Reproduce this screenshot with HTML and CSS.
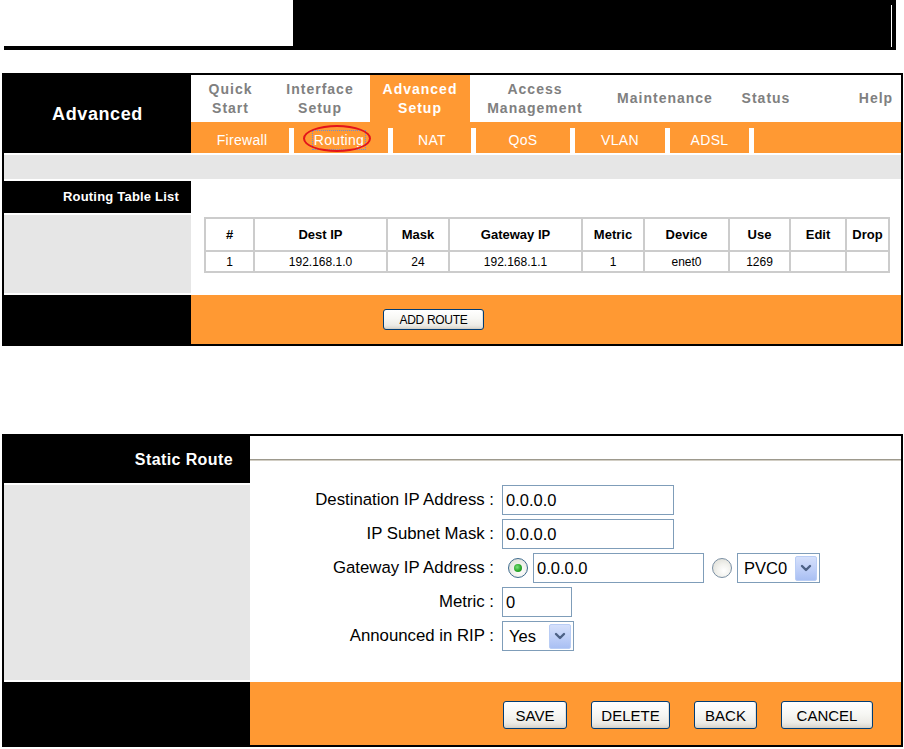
FILE: index.html
```html
<!DOCTYPE html>
<html>
<head>
<meta charset="utf-8">
<title>Advanced Setup - Routing</title>
<link rel="stylesheet" href="styles.css">
</head>
<body>
<div class="topbar">
  <div class="topbar-left"></div>
  <div class="topbar-right"><div class="topbar-tick"></div></div>
</div>

<div class="panel panel-routing">
  <div class="row nav-row">
    <div class="side side-black side-title">Advanced</div>
    <div class="nav">
      <div class="menu">
        <div class="menu-item w-qs">Quick<br>Start</div>
        <div class="menu-item w-is">Interface<br>Setup</div>
        <div class="menu-item w-as active">Advanced<br>Setup</div>
        <div class="menu-item w-am">Access<br>Management</div>
        <div class="menu-item w-mt">Maintenance</div>
        <div class="menu-item w-st">Status</div>
        <div class="menu-spacer"></div>
        <div class="menu-item w-hp">Help</div>
      </div>
      <div class="submenu">
        <div class="sub-item w-fw">Firewall</div>
        <div class="sub-item w-rt sub-current"><span class="focus-text">Routing</span><span class="ring"></span></div>
        <div class="sub-item w-nat">NAT</div>
        <div class="sub-item w-qos">QoS</div>
        <div class="sub-item w-vlan">VLAN</div>
        <div class="sub-item w-adsl">ADSL</div>
      </div>
    </div>
  </div>
  <div class="gap"></div>
  <div class="graybar"></div>
  <div class="gap"></div>
  <div class="row label-row">
    <div class="side side-black side-label">Routing Table List</div>
    <div class="main"></div>
  </div>
  <div class="gap"></div>
  <div class="row table-row">
    <div class="side side-gray"></div>
    <div class="main table-wrap">
      <table class="rtable">
        <colgroup>
          <col class="c1"><col class="c2"><col class="c3"><col class="c4"><col class="c5"><col class="c6"><col class="c7"><col class="c8"><col class="c9">
        </colgroup>
        <thead>
          <tr><th>#</th><th>Dest IP</th><th>Mask</th><th>Gateway IP</th><th>Metric</th><th>Device</th><th>Use</th><th>Edit</th><th>Drop</th></tr>
        </thead>
        <tbody>
          <tr><td>1</td><td>192.168.1.0</td><td>24</td><td>192.168.1.1</td><td>1</td><td>enet0</td><td>1269</td><td></td><td></td></tr>
        </tbody>
      </table>
    </div>
  </div>
  <div class="gap"></div>
  <div class="row foot-row-a">
    <div class="side side-black"></div>
    <div class="main foot-main-a"><button class="xp-btn btn-add">ADD ROUTE</button></div>
  </div>
</div>

<div class="panel panel-static">
  <div class="row head-row">
    <div class="side side-black side-head">Static Route</div>
    <div class="main head-main"><div class="head-line"></div></div>
  </div>
  <div class="gap"></div>
  <div class="row body-row">
    <div class="side side-gray"></div>
    <div class="main form">
      <div class="lbl">Destination IP Address :</div>
      <div class="ctrl"><input class="field f-wide" type="text" value="0.0.0.0"></div>

      <div class="lbl">IP Subnet Mask :</div>
      <div class="ctrl"><input class="field f-wide" type="text" value="0.0.0.0"></div>

      <div class="lbl">Gateway IP Address :</div>
      <div class="ctrl">
        <span class="radio checked"><span class="dot"></span></span>
        <input class="field f-gw" type="text" value="0.0.0.0">
        <span class="radio radio-2"></span>
        <span class="select s-pvc"><span class="sel-text">PVC0</span><span class="sel-btn"><svg width="14" height="10" viewBox="0 0 14 10"><path d="M3 3 L7 7 L11 3" fill="none" stroke="#4d6185" stroke-width="2.4" stroke-linecap="round" stroke-linejoin="round"/></svg></span></span>
      </div>

      <div class="lbl">Metric :</div>
      <div class="ctrl"><input class="field f-metric" type="text" value="0"></div>

      <div class="lbl">Announced in RIP :</div>
      <div class="ctrl">
        <span class="select s-rip"><span class="sel-text">Yes</span><span class="sel-btn"><svg width="14" height="10" viewBox="0 0 14 10"><path d="M3 3 L7 7 L11 3" fill="none" stroke="#4d6185" stroke-width="2.4" stroke-linecap="round" stroke-linejoin="round"/></svg></span></span>
      </div>
    </div>
  </div>
  <div class="gap"></div>
  <div class="row foot-row-b">
    <div class="side side-black"></div>
    <div class="main foot-main-b">
      <button class="xp-btn btn-big b-save">SAVE</button>
      <button class="xp-btn btn-big b-delete">DELETE</button>
      <button class="xp-btn btn-big b-back">BACK</button>
      <button class="xp-btn btn-big b-cancel">CANCEL</button>
    </div>
  </div>
</div>
</body>
</html>
```

FILE: styles.css
```css
* { box-sizing: border-box; }
html, body { margin: 0; padding: 0; background: #fff; }
body {
  width: 904px;
  font-family: "Liberation Sans", Arial, sans-serif;
  color: #000;
}

/* top strip */
.topbar { display: flex; height: 50px; }
.topbar-left { width: 289px; margin-left: 4px; border-bottom: 4px solid #000; }
.topbar-right { width: 603px; background: #000; display: flex; justify-content: flex-end; }
.topbar-tick { width: 1px; background: #fff; margin: 5px 4px 3px 0; }

/* panels */
.panel { margin-left: 2px; width: 901px; border: 2px solid #000; background: #fff; }
.panel-routing { margin-top: 23px; }
.panel-static { margin-top: 88px; }
.row { display: flex; }
.gap { height: 2px; background: #fff; }
.side { flex: 0 0 187px; }
.panel-static .side { flex-basis: 246px; }
.side-black { background: #000; color: #fff; }
.side-gray { background: #e6e6e6; }
.main { flex: 1; background: #fff; }

/* navigation */
.nav-row { height: 78px; }
.side-title {
  display: flex; align-items: center; justify-content: center;
  font-weight: bold; font-size: 18px; letter-spacing: 0.6px;
}
.nav { flex: 1; display: flex; flex-direction: column; }
.menu { height: 47px; display: flex; background: #fff; }
.menu-item {
  display: flex; align-items: center; justify-content: center;
  text-align: center; font-weight: bold; font-size: 14px;
  letter-spacing: 1px; line-height: 19px; color: #808080;
}
.menu-item.active { background: #ff9933; color: #fff; }
.w-qs { width: 79px; }
.w-is { width: 100px; }
.w-as { width: 100px; }
.w-am { width: 130px; }
.w-mt { width: 130px; }
.w-st { width: 72px; }
.menu-spacer { flex: 1; }
.w-hp { width: 50px; }

.submenu { height: 31px; background: #ff9933; display: flex; }
.sub-item {
  position: relative;
  margin-top: 6px; height: 25px; line-height: 25px;
  border-right: 5px solid #fff;
  color: #fff; font-size: 14px; letter-spacing: 0.3px; text-align: center;
}
.w-fw { width: 103px; padding-left: 4px; }
.w-rt { width: 99px; padding-right: 4px; }
.w-nat { width: 83px; }
.w-qos { width: 99px; }
.w-vlan { width: 95px; }
.w-adsl { width: 84px; }
.focus-text { outline: 1px dotted #6b8fd6; outline-offset: 1px; }
.ring {
  position: absolute; left: 9px; top: -3px; width: 68px; height: 27px;
  border: 2px solid #e3141b; border-radius: 50%;
}

.graybar { height: 24px; background: #e6e6e6; }

.label-row { height: 32px; }
.side-label {
  text-align: right; padding-right: 12px; line-height: 32px;
  font-weight: bold; font-size: 13px; letter-spacing: 0.2px;
}

/* table */
.table-row { height: 78px; }
.table-wrap { padding: 2px 0 0 13px; }
.rtable {
  table-layout: fixed; width: 686px;
  border-collapse: separate; border-spacing: 0;
  border: 1px solid #cccccc;
}
.c1 { width: 49px; } .c2 { width: 133px; } .c3 { width: 62px; }
.c4 { width: 133px; } .c5 { width: 62px; } .c6 { width: 85px; }
.c7 { width: 61px; } .c8 { width: 56px; } .c9 { width: 43px; }
.rtable th, .rtable td {
  border: 1px solid #cccccc; padding: 0; text-align: center;
}
.rtable th { height: 33px; font-size: 13px; font-weight: bold; }
.rtable td { height: 21px; font-size: 12px; }

/* footer A */
.foot-row-a { height: 49px; }
.foot-main-a { background: #ff9933; padding: 14px 0 0 192px; }

.xp-btn {
  display: inline-flex; align-items: center; justify-content: center;
  padding: 0; margin: 0;
  font-family: "Liberation Sans", Arial, sans-serif; color: #000;
  border: 1px solid #003c74; border-radius: 3px;
  background: linear-gradient(180deg, #ffffff 0%, #f7f7f4 45%, #ecebe6 80%, #d8d4cb 100%);
  box-shadow: inset 0 -1px 0 #d6d0c5, inset -1px 0 0 #e3e0d8;
}
.btn-add { width: 101px; height: 21px; font-size: 12px; letter-spacing: -0.3px; }

/* static route */
.head-row { height: 47px; }
.side-head {
  text-align: right; padding-right: 17px; line-height: 47px;
  font-weight: bold; font-size: 16px; letter-spacing: 0.4px;
}
.head-main { display: flex; align-items: center; }
.head-line { width: 100%; height: 2px; background: linear-gradient(180deg, #9d998d 0 50%, #d2cec4 50% 100%); }

.body-row { height: 195px; }
.form {
  display: grid; grid-template-columns: 244px auto; column-gap: 8px; row-gap: 4px;
  grid-auto-rows: 30px; align-content: start; justify-content: start;
}
.lbl { text-align: right; line-height: 30px; font-size: 16.8px; white-space: nowrap; }
.ctrl { display: flex; align-items: center; height: 30px; }
.field {
  height: 30px; border: 1px solid #7f9db9; padding: 0 0 0 3px; margin: 0;
  font-family: "Liberation Sans", Arial, sans-serif; font-size: 16.5px; color: #000;
  background: #fff; outline: none;
}
.f-wide { width: 172px; }
.f-gw { width: 171px; margin-left: 5px; }
.f-metric { width: 70px; }

.radio {
  width: 20px; height: 20px; border-radius: 50%;
  border: 1px solid #3d6b8e;
  background: radial-gradient(circle at 60% 65%, #ffffff 0%, #f2f2ee 40%, #d8d8d0 100%);
  display: inline-flex; align-items: center; justify-content: center;
  margin-left: 6px;
}
.radio-2 { margin-left: 8px; border-color: #7a8fa3; }
.dot {
  width: 8px; height: 8px; border-radius: 50%;
  background: radial-gradient(circle at 40% 40%, #7de07d 0%, #2aa82a 55%, #1b8a1b 100%);
}

.select {
  display: inline-flex; align-items: center; height: 30px;
  border: 1px solid #7f9db9; background: #fff; padding-right: 2px;
}
.s-pvc { width: 83px; margin-left: 5px; }
.s-rip { width: 72px; }
.sel-text { flex: 1; padding-left: 6px; font-size: 16.5px; }
.sel-btn {
  width: 22px; height: 25px; border-radius: 2px;
  border: 1px solid #b9cdf5;
  background: linear-gradient(180deg, #d5e0fb 0%, #bccdf7 60%, #a9bff3 100%);
  display: inline-flex; align-items: center; justify-content: center;
}

/* footer B */
.foot-row-b { height: 63px; }
.foot-main-b { background: #ff9933; padding: 19px 0 0 253px; display: flex; align-items: flex-start; gap: 24px; }
.btn-big { height: 28px; font-size: 15px; }
.b-save { width: 64px; }
.b-delete { width: 79px; }
.b-back { width: 63px; }
.b-cancel { width: 92px; }
```
